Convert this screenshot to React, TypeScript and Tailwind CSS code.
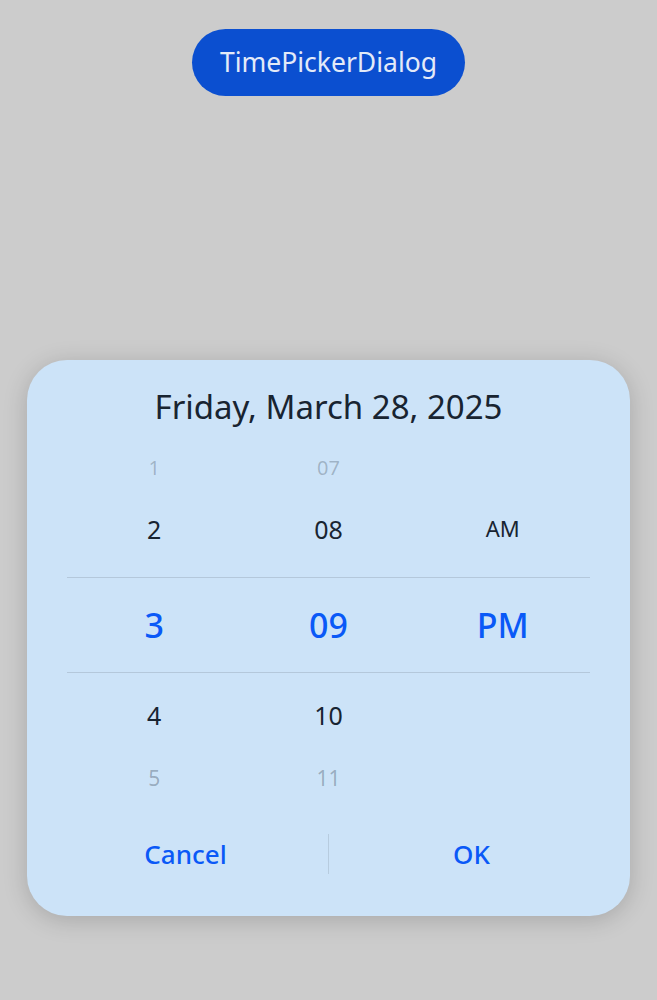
import React from 'react';

const font = { fontFamily: '"Noto Sans", "Liberation Sans", sans-serif' };

function Cell({ children, className }: { children?: React.ReactNode; className: string }) {
  return <div className={`flex items-center justify-center ${className}`}>{children}</div>;
}

export default function App() {
  return (
    <div className="min-h-screen w-full bg-[#cccccc] flex flex-col items-center" style={font}>
      <button className="mt-[29px] h-[67px] w-[273px] rounded-full bg-[#0b4fd0] text-[26.5px] text-[#e3eaf8]">
        TimePickerDialog
      </button>

      <div className="mt-[264px] w-[603px] h-[556px] rounded-[40px] bg-[#cce3f8] shadow-[0_4px_24px_rgba(0,0,0,0.18)] flex flex-col">
        <div className="pt-[22px] h-[88px] text-center text-[33px] text-[#182431]">Friday, March 28, 2025</div>

        <div className="mx-[40px] flex flex-col">
          {/* row 1 */}
          <div className="grid grid-cols-3 h-[54px] -mt-[7px]">
            <Cell className="text-[20px] text-[#182431]/25">1</Cell>
            <Cell className="text-[20px] text-[#182431]/25">07</Cell>
            <Cell className="" />
          </div>
          {/* row 2 */}
          <div className="grid grid-cols-3 h-[70px] mb-[12px]">
            <Cell className="text-[25px] text-[#182431]">2</Cell>
            <Cell className="text-[25px] text-[#182431]">08</Cell>
            <Cell className="text-[22px] text-[#182431] pb-[3px]">AM</Cell>
          </div>
          {/* selected row */}
          <div className="grid grid-cols-3 h-[96px] border-y border-[#a9bccf]/70">
            <Cell className="text-[34px] font-medium text-[#0a59f7]">3</Cell>
            <Cell className="text-[34px] font-medium text-[#0a59f7]">09</Cell>
            <Cell className="text-[34px] font-medium text-[#0a59f7]">PM</Cell>
          </div>
          {/* row 4 */}
          <div className="grid grid-cols-3 h-[86px]">
            <Cell className="text-[25px] text-[#182431]">4</Cell>
            <Cell className="text-[25px] text-[#182431]">10</Cell>
            <Cell className="" />
          </div>
          {/* row 5 */}
          <div className="grid grid-cols-3 h-[40px]">
            <Cell className="text-[21px] text-[#182431]/30">5</Cell>
            <Cell className="text-[21px] text-[#182431]/30">11</Cell>
            <Cell className="" />
          </div>
        </div>

        <div className="mt-[35px] mx-[16px] flex items-center h-[40px]">
          <div className="flex-1 text-center text-[26px] font-medium text-[#0a59f7]">Cancel</div>
          <div className="w-px h-[40px] bg-[#a9bccf]/60" />
          <div className="flex-1 text-center text-[26px] font-medium text-[#0a59f7]">OK</div>
        </div>
      </div>
    </div>
  );
}
